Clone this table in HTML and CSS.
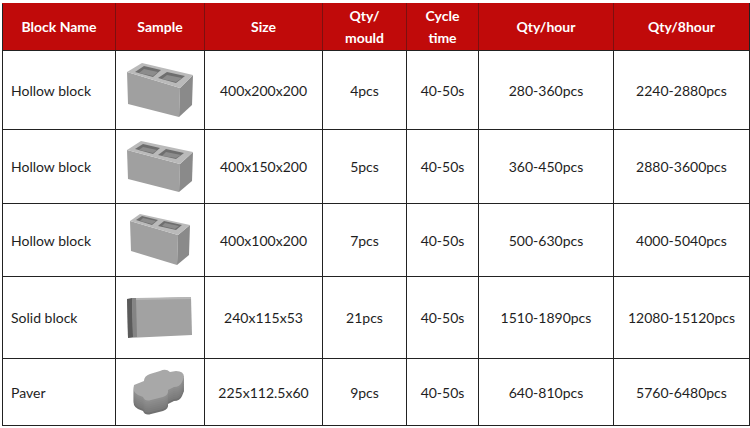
FILE: index.html
```html
<!DOCTYPE html>
<html>
<head>
<meta charset="utf-8">
<link rel="stylesheet" href="styles.css">
</head>
<body>
<table class="spec">
  <colgroup>
    <col class="c1"><col class="c2"><col class="c3"><col class="c4"><col class="c5"><col class="c6"><col class="c7">
  </colgroup>
  <thead>
    <tr class="head">
      <th>Block Name</th>
      <th>Sample</th>
      <th>Size</th>
      <th>Qty/<br>mould</th>
      <th>Cycle<br>time</th>
      <th>Qty/hour</th>
      <th>Qty/8hour</th>
    </tr>
  </thead>
  <tbody>
    <tr class="r1">
      <td class="name">Hollow block</td>
      <td class="pic">
        <svg class="blk" width="66" height="55" viewBox="0 0 66 55">
          <polygon points="0,9 53,25 52,54 1,41" fill="#a0a0a0"/>
          <polygon points="53,25 66,12 65,42 52,54" fill="#8a8a8a"/>
          <polygon points="0,9 15,0 66,12 53,25" fill="#bababa"/>
          <polygon points="8,9 17,3 34,7 26,14" fill="#6e6e6e"/>
          <polygon points="31,15 40,9 58,13 49,20" fill="#6e6e6e"/>
          <polygon points="12,10 17,6 31,9 26,13" fill="#8c8c8c"/>
          <polygon points="35,16 40,12 55,15 49,19" fill="#8c8c8c"/>
        </svg>
      </td>
      <td>400x200x200</td>
      <td>4pcs</td>
      <td>40-50s</td>
      <td>280-360pcs</td>
      <td>2240-2880pcs</td>
    </tr>
    <tr class="r2">
      <td class="name">Hollow block</td>
      <td class="pic">
        <svg class="blk" width="66" height="52" viewBox="0 0 66 52">
          <polygon points="0,9 53,23 52,51 1,38" fill="#a0a0a0"/>
          <polygon points="53,23 66,11 65,40 52,51" fill="#8a8a8a"/>
          <polygon points="0,9 14,0 66,11 53,23" fill="#bababa"/>
          <polygon points="8,8 16,3 33,7 26,13" fill="#6e6e6e"/>
          <polygon points="31,14 39,8 57,12 49,18" fill="#6e6e6e"/>
          <polygon points="12,9 16,6 30,9 26,12" fill="#8c8c8c"/>
          <polygon points="35,15 39,11 54,14 49,17" fill="#8c8c8c"/>
        </svg>
      </td>
      <td>400x150x200</td>
      <td>5pcs</td>
      <td>40-50s</td>
      <td>360-450pcs</td>
      <td>2880-3600pcs</td>
    </tr>
    <tr class="r3">
      <td class="name">Hollow block</td>
      <td class="pic">
        <svg class="blk" width="60" height="52" viewBox="0 0 60 52">
          <polygon points="0,7 48,21 47,51 1,37" fill="#a0a0a0"/>
          <polygon points="48,21 60,11 59,41 47,51" fill="#8a8a8a"/>
          <polygon points="0,7 10,0 60,11 48,21" fill="#bababa"/>
          <polygon points="6,6 12,2 28,6 22,11" fill="#6e6e6e"/>
          <polygon points="28,12 34,7 52,11 46,16" fill="#6e6e6e"/>
          <polygon points="10,7 13,4 26,7 22,10" fill="#8c8c8c"/>
          <polygon points="32,12 35,9 49,12 45,15" fill="#8c8c8c"/>
        </svg>
      </td>
      <td>400x100x200</td>
      <td>7pcs</td>
      <td>40-50s</td>
      <td>500-630pcs</td>
      <td>4000-5040pcs</td>
    </tr>
    <tr class="r4">
      <td class="name">Solid block</td>
      <td class="pic">
        <svg class="blk" width="66" height="41" viewBox="0 0 66 41">
          <polygon points="0,2 64,0 65,38 1,41" fill="#a2a2a2"/>
          <polygon points="0,2 5,1 6,40 1,41" fill="#5a5a5a"/>
          <polygon points="5,1 9,1 10,40 6,40" fill="#848484"/>
          <polygon points="9,1 64,0 64,2 9,3" fill="#b6b6b6"/>
        </svg>
      </td>
      <td>240x115x53</td>
      <td>21pcs</td>
      <td>40-50s</td>
      <td>1510-1890pcs</td>
      <td>12080-15120pcs</td>
    </tr>
    <tr class="r5">
      <td class="name">Paver</td>
      <td class="pic">
        <svg class="blk" width="56" height="50" viewBox="0 0 56 50">
          <defs>
            <path id="pv" d="M2,18 L12,14 Q12,9 18,7 L28,4 Q34,1 38,5 L44,4 Q52,4 52,10 L50,15 Q48,20 42,20 L36,23 Q37,28 31,30 L19,33 Q13,35 11,30 L6,28 Q0,25 2,18 Z"/>
          </defs>
          <use href="#pv" y="14" fill="#707070"/>
          <use href="#pv" y="12" fill="#7a7a7a"/>
          <use href="#pv" y="10" fill="#7e7e7e"/>
          <use href="#pv" y="8" fill="#828282"/>
          <use href="#pv" y="6" fill="#868686"/>
          <use href="#pv" y="4" fill="#8a8a8a"/>
          <use href="#pv" y="2" fill="#8e8e8e"/>
          <use href="#pv" y="0" fill="#a8a8a8"/>
        </svg>
      </td>
      <td>225x112.5x60</td>
      <td>9pcs</td>
      <td>40-50s</td>
      <td>640-810pcs</td>
      <td>5760-6480pcs</td>
    </tr>
  </tbody>
</table>
</body>
</html>
```

FILE: styles.css
```css
html, body {
  margin: 0;
  padding: 0;
  background: #ffffff;
}

body {
  padding: 3px 0 0 2px;
  font-family: Lato, "Open Sans", "Liberation Sans", sans-serif;
}

.spec {
  border-collapse: collapse;
  table-layout: fixed;
  width: 747px;
}

.c1 { width: 113px; }
.c2 { width: 89px; }
.c3 { width: 118px; }
.c4 { width: 84px; }
.c5 { width: 72px; }
.c6 { width: 135px; }
.c7 { width: 136px; }

.spec th {
  background: #c00a0a;
  color: #ffffff;
  font-weight: 700;
  font-size: 14px;
  line-height: 22px;
  text-align: center;
  vertical-align: middle;
  padding: 0;
  border: 1px solid #222222;
  border-top-color: #c00a0a;
  border-left-color: #7c1010;
  border-right-color: #7c1010;
}

.spec th:first-child { border-left-color: #222222; }
.spec th:last-child { border-right-color: #222222; }

.spec td {
  border: 1px solid #222222;
  font-size: 14px;
  color: #1e1e1e;
  text-align: center;
  vertical-align: middle;
  padding: 0;
}

.spec td.name {
  text-align: left;
  padding-left: 8px;
}

.spec td.pic {
  line-height: 0;
}

.blk { display: inline-block; }

.head { height: 47px; }
.r1 { height: 79px; }
.r2 { height: 74px; }
.r3 { height: 73px; }
.r4 { height: 82px; }
.r5 { height: 67px; }
```
